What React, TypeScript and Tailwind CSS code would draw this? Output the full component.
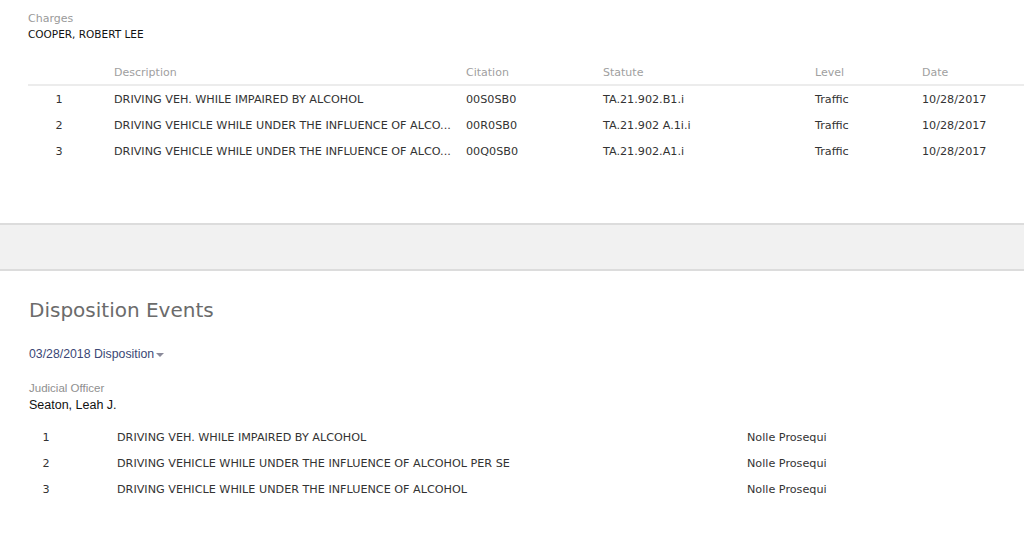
import React from "react";

const charges = [
  { n: 1, d: "DRIVING VEH. WHILE IMPAIRED BY ALCOHOL", c: "00S0SB0", s: "TA.21.902.B1.i", l: "Traffic", dt: "10/28/2017" },
  { n: 2, d: "DRIVING VEHICLE WHILE UNDER THE INFLUENCE OF ALCO...", c: "00R0SB0", s: "TA.21.902 A.1i.i", l: "Traffic", dt: "10/28/2017" },
  { n: 3, d: "DRIVING VEHICLE WHILE UNDER THE INFLUENCE OF ALCO...", c: "00Q0SB0", s: "TA.21.902.A1.i", l: "Traffic", dt: "10/28/2017" },
];

const dispo = [
  { n: 1, d: "DRIVING VEH. WHILE IMPAIRED BY ALCOHOL" },
  { n: 2, d: "DRIVING VEHICLE WHILE UNDER THE INFLUENCE OF ALCOHOL PER SE" },
  { n: 3, d: "DRIVING VEHICLE WHILE UNDER THE INFLUENCE OF ALCOHOL" },
];

const verd = { fontFamily: '"DejaVu Sans", Verdana, sans-serif' };

export default function App() {
  return (
    <div className="w-[1024px] h-[539px] overflow-hidden bg-white" style={{ fontFamily: '"Liberation Sans", Arial, sans-serif' }}>
      <div className="h-[223px] pt-[12px] pl-[28px]">
        <div className="text-[11px] leading-[13px] text-[#9a9a9a]" style={verd}>Charges</div>
        <div className="text-[10.5px] leading-[14px] mt-[2px] text-[#111]" style={verd}>COOPER, ROBERT LEE</div>
        <div className="mt-[21px] text-[11.2px] text-[#333]" style={verd}>
          <div className="flex h-[24px] items-center border-b-2 border-[#ececec] text-[#a0a0a0] text-[11px]">
            <div className="w-[86px]" />
            <div className="w-[352px]">Description</div>
            <div className="w-[137px]">Citation</div>
            <div className="w-[212px]">Statute</div>
            <div className="w-[107px]">Level</div>
            <div>Date</div>
          </div>
          <div className="pt-[1px]">
            {charges.map((r) => (
              <div key={r.n} className="flex h-[26px] items-center">
                <div className="w-[62px] text-center">{r.n}</div>
                <div className="w-[24px]" />
                <div className="w-[352px] whitespace-nowrap">{r.d}</div>
                <div className="w-[137px]">{r.c}</div>
                <div className="w-[212px]">{r.s}</div>
                <div className="w-[107px]">{r.l}</div>
                <div>{r.dt}</div>
              </div>
            ))}
          </div>
        </div>
      </div>
      <div className="h-[48px] bg-[#f1f1f1] border-t-2 border-b-2 border-[#dcdcdc]" />
      <div className="pl-[29px] pt-[24px]">
        <div className="text-[20px] leading-[30px] text-[#6b6b6b]" style={verd}>Disposition Events</div>
        <div className="mt-[21px] flex items-center text-[12.3px] leading-[16px] text-[#3b4775]">
          03/28/2018 Disposition
          <svg width="8" height="4" viewBox="0 0 8 4" className="ml-[2px] mt-[2px]"><path d="M0 0h8L4 4z" fill="#8a8a9a" /></svg>
        </div>
        <div className="mt-[19px] text-[11.5px] leading-[14px] text-[#8f8f8f]">Judicial Officer</div>
        <div className="text-[12.5px] leading-[16px] text-[#111] mt-[2px]">Seaton, Leah J.</div>
        <div className="mt-[12px] text-[11.2px] text-[#333]" style={verd}>
          {dispo.map((r) => (
            <div key={r.n} className="flex h-[26px] items-center">
              <div className="w-[34px] text-center">{r.n}</div>
              <div className="w-[54px]" />
              <div className="w-[630px] whitespace-nowrap">{r.d}</div>
              <div>Nolle Prosequi</div>
            </div>
          ))}
        </div>
      </div>
    </div>
  );
}
